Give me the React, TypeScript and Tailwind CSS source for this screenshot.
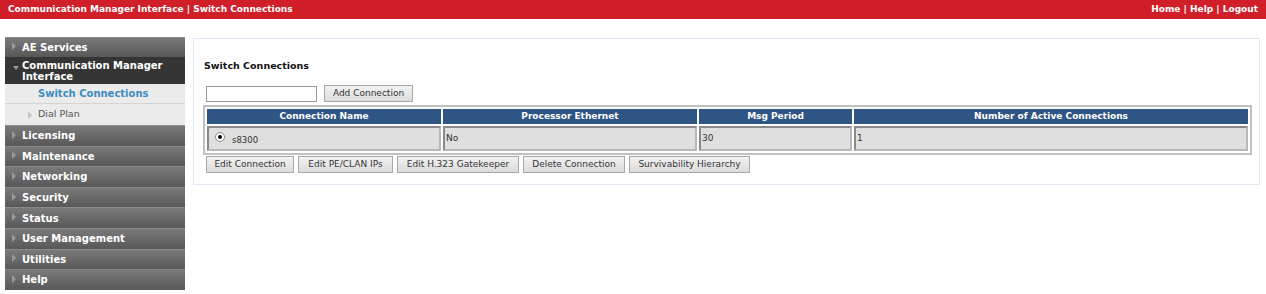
import React from 'react';

const font = { fontFamily: '"DejaVu Sans", Verdana, sans-serif' };

const menu = [
  'Licensing',
  'Maintenance',
  'Networking',
  'Security',
  'Status',
  'User Management',
  'Utilities',
  'Help',
];

const Arrow = () => (
  <span className="inline-block w-0 h-0 border-y-[4px] border-y-transparent border-l-[4px] border-l-[#9a9a9a] mr-[6px] translate-y-[-1px]" />
);

const MenuItem = ({ label, h = 'h-[20.6px]' }: { label: string; h?: string }) => (
  <div className={`${h} flex items-center pl-[7px] text-[10px] font-bold text-white bg-gradient-to-b from-[#7a7a7a] to-[#585858] border-t border-[#8a8a8a]`}>
    <Arrow />
    {label}
  </div>
);

const Btn = ({ children, w }: { children: React.ReactNode; w: string }) => (
  <button className={`h-[17px] ${w} bg-gradient-to-b from-[#f2f2f2] to-[#dcdcdc] border border-[#a8a8a8] text-[9px] text-[#333] flex items-center justify-center`}>
    {children}
  </button>
);

const cell = 'border-2 border-t-[#8a8a8a] border-l-[#8a8a8a] border-b-[#b8b8b8] border-r-[#b8b8b8]';

export default function App() {
  return (
    <div className="w-[1266px] h-[294px] bg-white overflow-hidden" style={font}>
      <div className="h-[19px] bg-[#d11f2a] flex items-center justify-between px-[8px] text-white font-bold text-[9px]">
        <span>Communication Manager Interface | Switch Connections</span>
        <span>Home | Help | Logout</span>
      </div>

      <div className="flex pt-[18px]">
        <div className="ml-[5px] w-[180px] shrink-0">
          <MenuItem label="AE Services" h="h-[19.5px]" />
          <div className="h-[27.5px] bg-[#353535] text-white text-[10px] font-bold leading-[11px] flex items-start pl-[8px] pt-[3px]">
            <span className="inline-block w-0 h-0 border-x-[3px] border-x-transparent border-t-[4px] border-t-[#9a9a9a] mr-[3px] mt-[6px]" />
            <span>Communication Manager<br />Interface</span>
          </div>
          <div className="h-[20px] bg-[#ebebeb] border-b border-[#d4d4d4] flex items-center pl-[33px] text-[10px] font-bold text-[#3d8cc0]">
            Switch Connections
          </div>
          <div className="h-[21px] bg-[#ebebeb] flex items-center pl-[23px] text-[9.5px] text-[#555]">
            <span className="inline-block w-0 h-0 border-y-[4px] border-y-transparent border-l-[4px] border-l-[#c4c4c4] mr-[6px]" />
            Dial Plan
          </div>
          {menu.map((m) => (
            <MenuItem key={m} label={m} />
          ))}
        </div>

        <div className="ml-[8px] mt-[1px] w-[1067px] h-[147px] border border-[#dfe8f2] pl-[9px] pt-[20px]">
          <div className="ml-[1px] text-[9.5px] font-bold text-[#111]">Switch Connections</div>
          <div className="flex items-center gap-[7px] mt-[12px] ml-[3px]">
            <input className="w-[111px] h-[16px] border border-[#9a9a9a] bg-white" />
            <Btn w="w-[89px]">Add Connection</Btn>
          </div>
          <table
            className="mt-[3px] w-[1049px] border-separate border-[2px] border-[#c0c0c0] bg-white text-[9px]"
            style={{ borderSpacing: '2px' }}
          >
            <thead>
              <tr className="bg-[#2f5585] text-white font-bold h-[15px]">
                <th className="w-[234px] font-bold">Connection Name</th>
                <th className="w-[254px] font-bold">Processor Ethernet</th>
                <th className="w-[153px] font-bold">Msg Period</th>
                <th className="font-bold">Number of Active Connections</th>
              </tr>
            </thead>
            <tbody>
              <tr className="h-[25px] bg-[#dfdfdf] text-[#333]">
                <td className={`${cell} pl-[6px]`}>
                  <div className="flex items-center gap-[7px]">
                    <span className="w-[10px] h-[10px] rounded-full border border-[#888] bg-white flex items-center justify-center -translate-y-[2px]">
                      <span className="w-[4px] h-[4px] rounded-full bg-black" />
                    </span>
                    <span className="translate-y-[2px] text-[8.5px]">s8300</span>
                  </div>
                </td>
                <td className={`${cell} pl-[1px]`}>No</td>
                <td className={`${cell} pl-[1px]`}>30</td>
                <td className={`${cell} pl-[1px]`}>1</td>
              </tr>
            </tbody>
          </table>
          <div className="flex gap-[4px] mt-[1px] ml-[3px]">
            <Btn w="w-[88px]">Edit Connection</Btn>
            <Btn w="w-[95px]">Edit PE/CLAN IPs</Btn>
            <Btn w="w-[122px]">Edit H.323 Gatekeeper</Btn>
            <Btn w="w-[102px]">Delete Connection</Btn>
            <Btn w="w-[121px]">Survivability Hierarchy</Btn>
          </div>
        </div>
      </div>
    </div>
  );
}
